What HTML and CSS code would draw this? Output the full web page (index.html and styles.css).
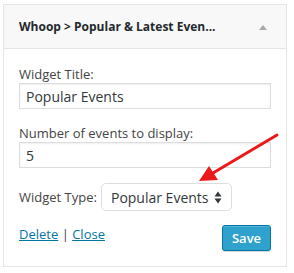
FILE: index.html
```html
<!DOCTYPE html>
<html>
<head>
<meta charset="utf-8">
<link rel="stylesheet" href="styles.css">
</head>
<body>
<div class="widget">
  <div class="widget-top">
    <h3 class="widget-title">Whoop &gt; Popular &amp; Latest Even...</h3>
    <svg class="toggle" width="8" height="5" viewBox="0 0 8 5"><path d="M0 5 L4 0 L8 5 Z" fill="#aaa"/></svg>
  </div>
  <div class="widget-inside">
    <div class="field">
      <label class="label">Widget Title:</label>
      <input class="text-input" type="text" value="Popular Events">
    </div>
    <div class="field">
      <label class="label">Number of events to display:</label>
      <input class="text-input" type="text" value="5">
    </div>
    <div class="field row">
      <label class="label">Widget Type:</label>
      <span class="select-wrap">
        <select class="select"><option>Popular Events</option></select>
        <svg class="select-arrows" width="8" height="13" viewBox="0 0 8 13"><path d="M0.5 5.5 L4 0.5 L7.5 5.5 Z M0.5 7.5 L4 12.5 L7.5 7.5 Z" fill="#32373c"/></svg>
      </span>
    </div>
    <div class="actions">
      <div class="links"><a href="#">Delete</a> | <a href="#">Close</a></div>
      <button class="save">Save</button>
    </div>
  </div>
</div>
<svg class="annotation" width="294" height="273" viewBox="0 0 294 273">
  <line x1="277" y1="135" x2="213" y2="173" stroke="#ea1a1a" stroke-width="3" stroke-linecap="round"/>
  <path d="M199 181 L209 166 L218 180 Z" fill="#ea1a1a"/>
</svg>
</body>
</html>
```

FILE: styles.css
```css
html, body {
  margin: 0;
  padding: 0;
  background: #fff;
}
body {
  font-family: "Open Sans", "Liberation Sans", sans-serif;
  font-size: 13px;
  color: #444;
  position: relative;
  width: 294px;
  height: 273px;
  overflow: hidden;
}
.widget {
  box-sizing: border-box;
  width: 284px;
  margin: 4px 0 0 3px;
  border: 1px solid #e5e5e5;
  background: #fff;
}
.widget-top {
  display: flex;
  align-items: center;
  justify-content: space-between;
  height: 43px;
  padding: 0 19px 0 15px;
  background: #f8f8f8;
  border-bottom: 1px solid #e5e5e5;
}
.widget-title {
  margin: 0;
  font-size: 12px;
  font-weight: 700;
  color: #23282d;
  white-space: nowrap;
}
.toggle {
  display: block;
  margin-top: 1px;
}
.widget-inside {
  display: flex;
  flex-direction: column;
  gap: 15px;
  padding: 16px 15px 15px;
}
.field {
  display: flex;
  flex-direction: column;
}
.label {
  line-height: 18px;
  color: #444;
}
.text-input {
  box-sizing: border-box;
  width: 252px;
  height: 26px;
  margin: 0;
  padding: 0 6px;
  border: 1px solid #ddd;
  border-radius: 0;
  font-family: "Open Sans", "Liberation Sans", sans-serif;
  font-size: 14px;
  color: #32373c;
  background: #fff;
  box-shadow: inset 0 1px 2px rgba(0,0,0,0.07);
  outline: none;
}
.row {
  flex-direction: row;
  align-items: center;
  gap: 4px;
}
.select-wrap {
  position: relative;
  display: inline-block;
}
.select {
  -webkit-appearance: none;
  appearance: none;
  box-sizing: border-box;
  width: 131px;
  height: 28px;
  margin: 0;
  padding: 0 0 0 9px;
  border: 1px solid #ddd;
  border-radius: 5px;
  background: #fff;
  font-family: "Open Sans", "Liberation Sans", sans-serif;
  font-size: 14px;
  color: #32373c;
  outline: none;
}
.select-arrows {
  position: absolute;
  right: 10px;
  top: 8px;
  pointer-events: none;
}
.actions {
  display: flex;
  justify-content: space-between;
  align-items: flex-start;
  margin-top: -1px;
}
.links {
  line-height: 18px;
  color: #444;
}
.links a {
  color: #0074a2;
  text-decoration: underline;
}
.save {
  box-sizing: border-box;
  height: 26px;
  width: 49px;
  margin-top: 0;
  padding: 0 8px 1px;
  border: 1px solid #0074a2;
  border-radius: 3px;
  background: #2ea2cc;
  color: #fff;
  font-family: "Open Sans", "Liberation Sans", sans-serif;
  font-size: 13px;
  font-weight: 600;
  box-shadow: inset 0 1px 0 rgba(120,200,230,0.5), 0 1px 0 rgba(0,0,0,0.15);
}
.annotation {
  position: absolute;
  left: 0;
  top: 0;
  pointer-events: none;
}
```
